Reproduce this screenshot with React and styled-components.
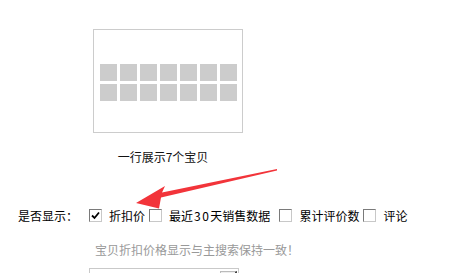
import React from 'react';
import styled, { createGlobalStyle } from 'styled-components';

const GlobalStyle = createGlobalStyle`
  html, body {
    margin: 0;
    padding: 0;
    background: #fff;
  }
  body {
    font-family: "Noto Sans CJK SC", "Liberation Sans", sans-serif;
    font-size: 12px;
    color: #000;
    overflow: hidden;
  }
`;

const options = [
  { label: '折扣价', checked: true, gap: 4 },
  { label: ['最近', '30', '天销售数据'], checked: false, gap: 9 },
  { label: '累计评价数', checked: false, gap: 4 },
  { label: '评论', checked: false, gap: 4 },
];

function renderLabel(label) {
  if (!Array.isArray(label)) return label;
  return label.map((part, i) =>
    /\d/.test(part) ? <StDigits key={i}>{part}</StDigits> : <React.Fragment key={i}>{part}</React.Fragment>
  );
}

function App() {
  return (
    <StPage>
      <GlobalStyle />
      <StPreviewBlock>
        <StPreviewBox>
          <StGrid>
            {Array.from({ length: 14 }).map((_, i) => (
              <StCell key={i} />
            ))}
          </StGrid>
        </StPreviewBox>
        <StCaption>一行展示7个宝贝</StCaption>
      </StPreviewBlock>

      <StRow>
        <StLabel>是否显示：</StLabel>
        <StOptions>
          {options.map((o, i) => (
            <StOption key={i} gap={o.gap}>
              <StCheck>
                {o.checked && (
                  <svg width="9" height="9" viewBox="0 0 9 9">
                    <path d="M1 4.5 L3.5 7 L8 1.5" stroke="#000" strokeWidth="1.8" fill="none" />
                  </svg>
                )}
              </StCheck>
              <span>{renderLabel(o.label)}</span>
            </StOption>
          ))}
        </StOptions>
      </StRow>

      <StHint>宝贝折扣价格显示与主搜索保持一致！</StHint>

      <StSelect>
        <StSelectButton />
      </StSelect>

      <StArrow width="475" height="273" viewBox="0 0 475 273">
        <path d="M277 169 L162 192.5 L165 186 L136 203 L159 208.5 L161 197.5 L277 170.5 Z" fill="#f2343a" />
      </StArrow>
    </StPage>
  );
}

const StPage = styled.div`
  position: relative;
  width: 475px;
  height: 273px;
  padding-top: 29px;
  box-sizing: border-box;
  overflow: hidden;
`;

const StPreviewBlock = styled.div`
  margin-left: 93px;
  width: 150px;
`;

const StPreviewBox = styled.div`
  width: 150px;
  height: 104px;
  box-sizing: border-box;
  border: 1px solid #cccccc;
  display: flex;
  align-items: center;
  justify-content: center;
  padding-top: 2px;
`;

const StGrid = styled.div`
  display: grid;
  grid-template-columns: repeat(7, 17px);
  grid-auto-rows: 17px;
  gap: 3px;
`;

const StCell = styled.div`
  background: #cccccc;
`;

const StCaption = styled.div`
  margin-top: 16px;
  padding-right: 10px;
  text-align: center;
  line-height: 16px;
  color: #111;
`;

const StRow = styled.div`
  display: flex;
  align-items: center;
  margin-top: 42px;
  padding-left: 18px;
  height: 16px;
`;

const StLabel = styled.span`
  width: 71px;
  color: #000;
`;

const StOptions = styled.div`
  display: flex;
  align-items: center;
`;

const StOption = styled.label`
  display: flex;
  align-items: center;
  gap: 7px;
  margin-right: ${(p) => p.gap}px;
  color: #000;
`;

const StDigits = styled.span`
  letter-spacing: 1.5px;
  padding-left: 1px;
`;

const StCheck = styled.span`
  width: 13px;
  height: 13px;
  box-sizing: border-box;
  border: 1px solid #7a7a7a;
  border-right-color: #c8c8c8;
  border-bottom-color: #c8c8c8;
  background: #fff;
  display: flex;
  align-items: center;
  justify-content: center;
`;

const StHint = styled.div`
  margin-top: 19px;
  padding-left: 95px;
  line-height: 16px;
  color: #999999;
`;

const StSelect = styled.div`
  margin-top: 10px;
  margin-left: 89px;
  width: 150px;
  height: 20px;
  box-sizing: border-box;
  border: 1px solid #c9c9c9;
  display: flex;
  justify-content: flex-end;
  padding: 2px 1px;
`;

const StSelectButton = styled.div`
  width: 17px;
  height: 16px;
  box-sizing: border-box;
  border: 1px solid #bbb;
  border-right: 2px solid #444;
  background: #eee;
`;

const StArrow = styled.svg`
  position: absolute;
  left: 0;
  top: 0;
  pointer-events: none;
`;

export default App;
